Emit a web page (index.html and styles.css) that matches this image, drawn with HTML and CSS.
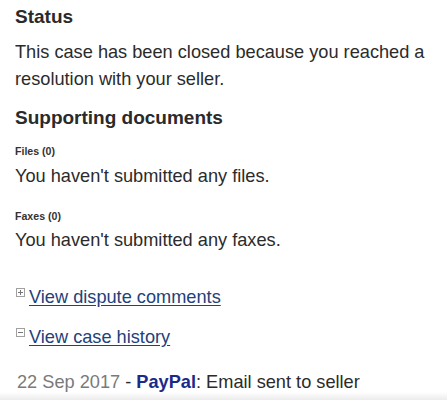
FILE: index.html
```html
<!DOCTYPE html>
<html>
<head>
<meta charset="utf-8">
<link rel="stylesheet" href="styles.css">
</head>
<body>
<div class="page">
  <h2 class="heading">Status</h2>
  <p class="text text-status">This case has been closed because you reached a resolution with your seller.</p>
  <h2 class="heading heading-docs">Supporting documents</h2>
  <h3 class="label label-files">Files (0)</h3>
  <p class="text text-files">You haven't submitted any files.</p>
  <h3 class="label label-faxes">Faxes (0)</h3>
  <p class="text text-faxes">You haven't submitted any faxes.</p>
  <div class="toggle toggle-first">
    <svg class="box" width="9" height="9" viewBox="0 0 9 9"><rect x="0.5" y="0.5" width="8" height="8" fill="#fff" stroke="#a0a0a0"/><path d="M2 4.5h5M4.5 2v5" stroke="#777" stroke-width="1"/></svg>
    <a class="link" href="#">View dispute comments</a>
  </div>
  <div class="toggle toggle-second">
    <svg class="box" width="9" height="9" viewBox="0 0 9 9"><rect x="0.5" y="0.5" width="8" height="8" fill="#fff" stroke="#a0a0a0"/><path d="M2 4.5h5" stroke="#777" stroke-width="1"/></svg>
    <a class="link" href="#">View case history</a>
  </div>
  <p class="history"><span class="date">22 Sep 2017</span> - <b class="who">PayPal</b>: Email sent to seller</p>
</div>
<div class="shade"></div>
</body>
</html>
```
FILE: styles.css
```css
html, body {
  margin: 0;
  padding: 0;
  background: #fff;
}
body {
  font-family: "Liberation Sans", Arial, sans-serif;
  color: #2b2b2b;
  overflow: hidden;
  height: 400px;
  position: relative;
}
.page {
  padding: 5px 15px 0 15px;
}
.heading {
  font-size: 19px;
  font-weight: bold;
  margin: 0;
  line-height: 24px;
  color: #2a2a2a;
}
.heading-docs {
  margin-top: 13px;
}
.text {
  font-size: 18.2px;
  line-height: 27px;
  margin: 0;
  color: #2b2b2b;
}
.text-status {
  margin-top: 10px;
}
.text-files {
  margin-top: 5px;
}
.text-faxes {
  margin-top: 4px;
}
.label {
  font-size: 10.6px;
  font-weight: bold;
  margin: 0;
  line-height: 14px;
  color: #333;
}
.label-files {
  margin-top: 14px;
}
.label-faxes {
  margin-top: 19px;
}
.toggle {
  display: flex;
  align-items: flex-start;
}
.toggle-first {
  margin-top: 32px;
}
.toggle-second {
  margin-top: 18px;
}
.box {
  margin: 2px 4px 0 1px;
  flex: none;
}
.link {
  font-size: 18.2px;
  line-height: 22px;
  color: #23417a;
  text-decoration: underline;
  text-underline-offset: 2px;
}
.history {
  font-size: 18.2px;
  line-height: 22px;
  margin: 23px 0 0 2px;
  color: #2b2b2b;
}
.date {
  color: #7a7a7a;
}
.who {
  color: #1b2a8a;
}
.shade {
  position: absolute;
  left: 0;
  right: 0;
  bottom: 0;
  height: 8px;
  background: linear-gradient(#fff, #ececec);
}
```
